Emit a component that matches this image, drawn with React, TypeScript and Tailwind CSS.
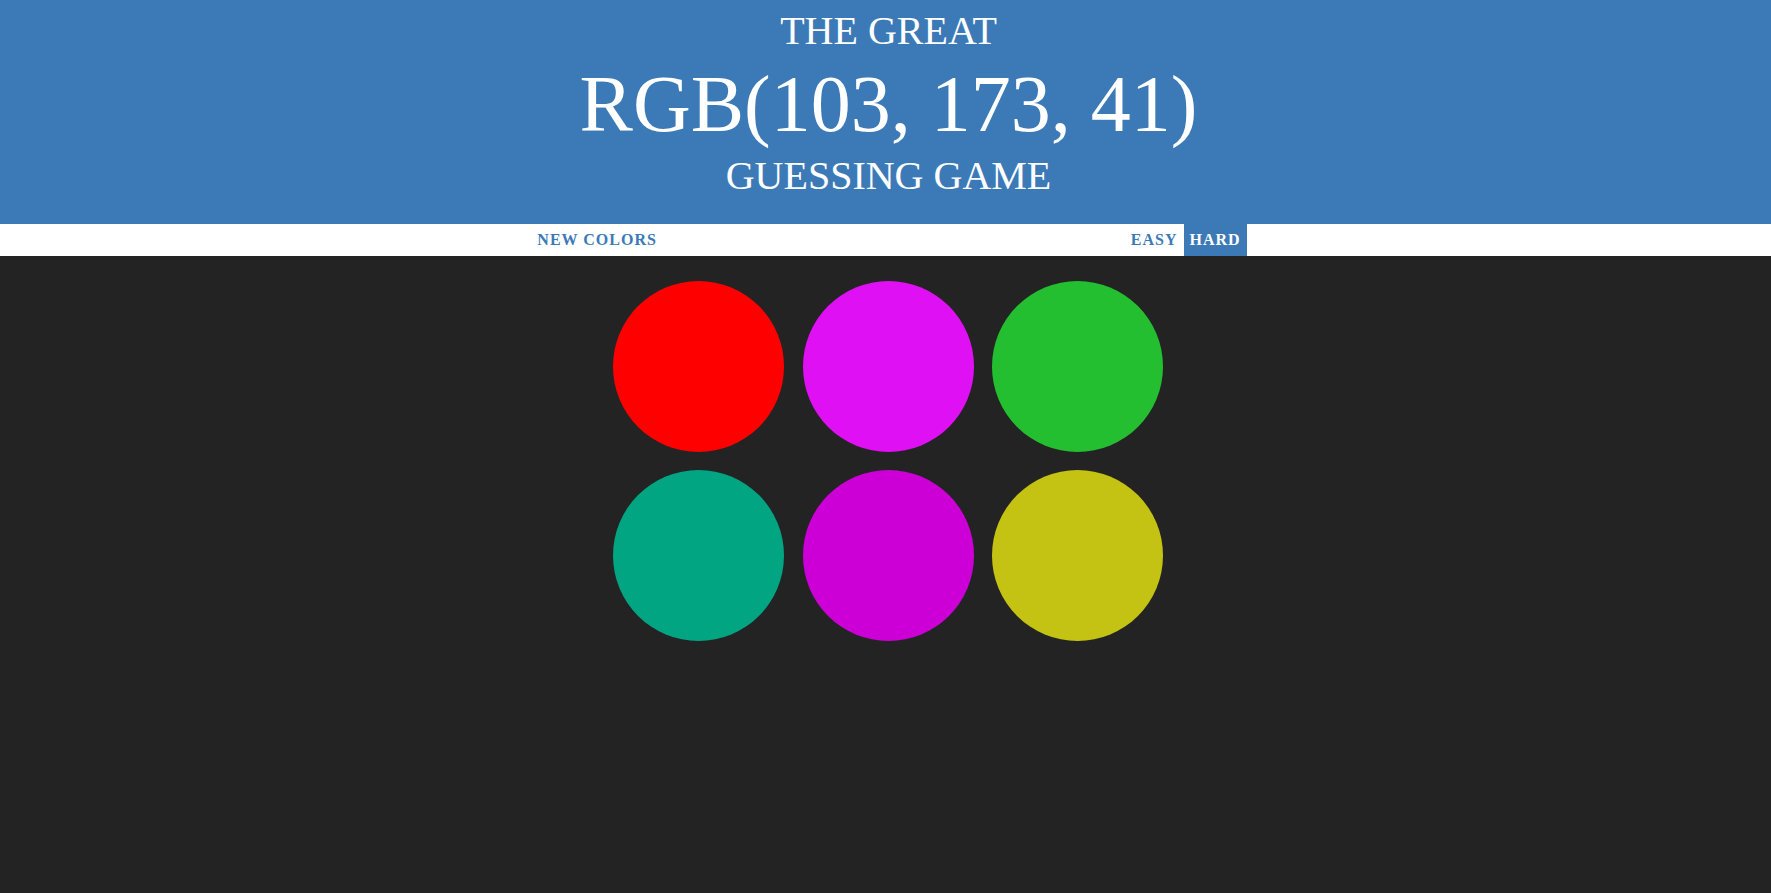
import { useState } from 'react';

const colors = ['#ff0000', '#e010f5', '#24bf30', '#02a582', '#cc00d6', '#c4c212'];

export default function App() {
  const [mode, setMode] = useState<'easy' | 'hard'>('hard');

  return (
    <div className="min-h-[893px] bg-[#232323] font-['Liberation_Serif',serif]">
      <h1 className="bg-[#3c7ab7] text-white text-center uppercase font-normal pt-[8px] pb-[27px] pl-[6px]">
        <div className="text-[40px] leading-[46px]">The Great</div>
        <div className="text-[80px] leading-[101px]">RGB(103, 173, 41)</div>
        <div className="text-[40px] leading-[42px]">Guessing Game</div>
      </h1>

      <div className="flex justify-center items-stretch h-[32px] bg-white pl-[7px]">
        <button className="px-[6px] uppercase font-bold text-[16px] tracking-[1px] text-[#3c7ab7]">
          New Colors
        </button>
        <span className="w-[462px]" />
        <button
          onClick={() => setMode('easy')}
          className={
            mode === 'easy'
              ? 'px-[6px] uppercase font-bold text-[16px] tracking-[1px] bg-[#3c7ab7] text-white'
              : 'px-[6px] uppercase font-bold text-[16px] tracking-[1px] text-[#3c7ab7]'
          }
        >
          Easy
        </button>
        <button
          onClick={() => setMode('hard')}
          className={
            mode === 'hard'
              ? 'px-[6px] uppercase font-bold text-[16px] tracking-[1px] bg-[#3c7ab7] text-white'
              : 'px-[6px] uppercase font-bold text-[16px] tracking-[1px] text-[#3c7ab7]'
          }
        >
          Hard
        </button>
      </div>

      <div className="flex justify-center pl-[5px] pt-[25px]">
        <div className="grid grid-cols-3 gap-x-[18.5px] gap-y-[18px]">
          {colors.map((c) => (
            <div key={c} className="w-[171px] h-[171px] rounded-full" style={{ background: c }} />
          ))}
        </div>
      </div>
    </div>
  );
}
